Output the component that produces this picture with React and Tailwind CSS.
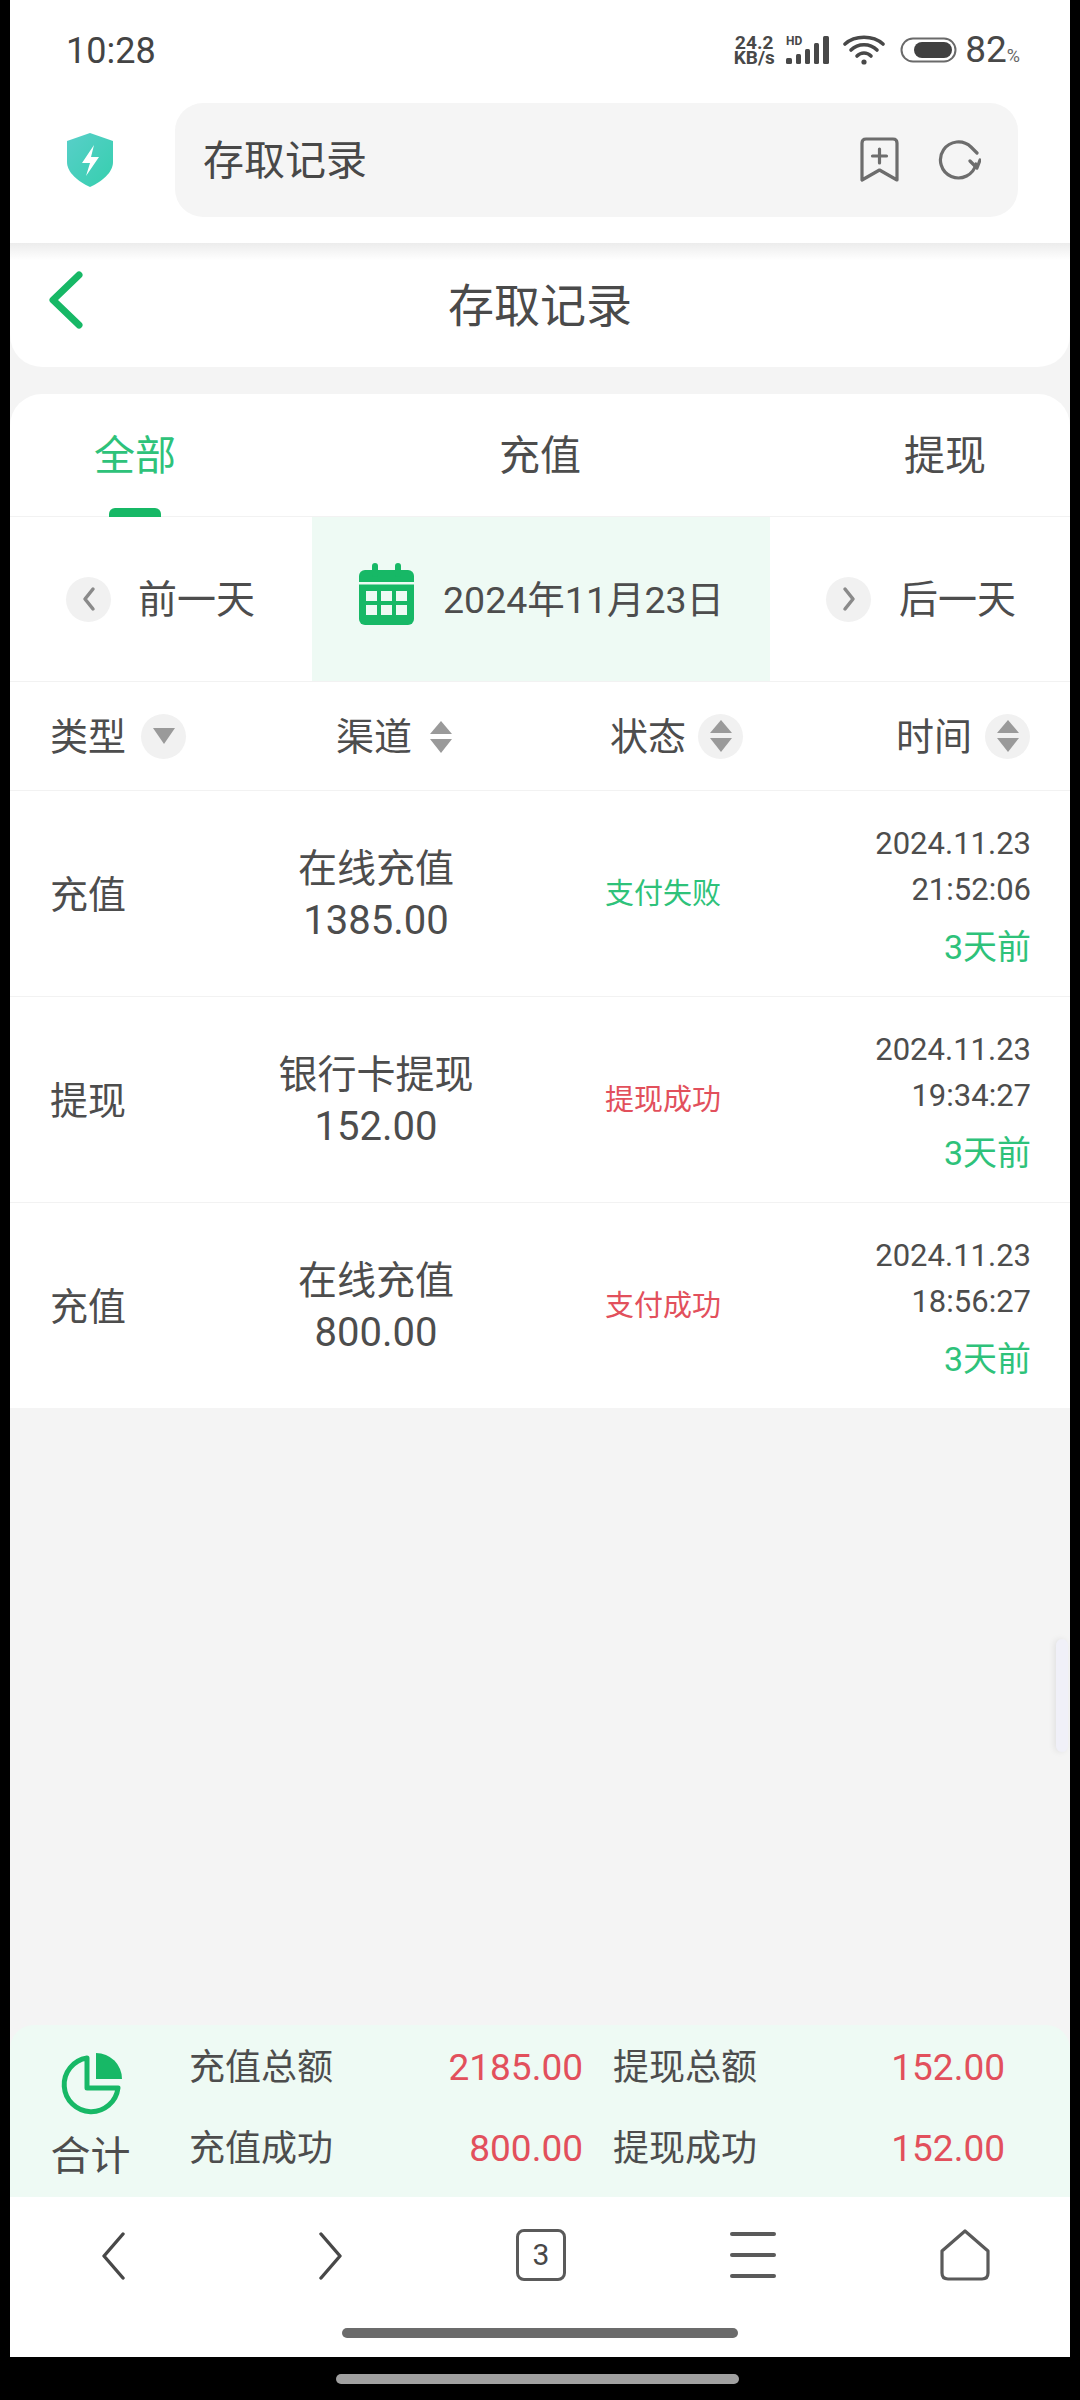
const font = { fontFamily: "Roboto, 'Noto Sans CJK SC', sans-serif" };

function Sort({ only }) {
  return (
    <svg width="24" height="34" viewBox="0 0 24 34" className="block">
      {!only && <path d="M12 1 L23 14 H1 Z" fill="#9a9a9a" />}
      <path d="M1 19 H23 L12 33 Z" fill="#9a9a9a" />
    </svg>
  );
}

function SortCircle({ only }) {
  return (
    <div className="w-[45px] h-[45px] rounded-full bg-[#f1f1f1] flex items-center justify-center">
      {only ? (
        <svg width="24" height="18" viewBox="0 0 24 18"><path d="M1 1 H23 L12 17 Z" fill="#9a9a9a" /></svg>
      ) : (
        <Sort />
      )}
    </div>
  );
}

function RoundChevron({ right }) {
  return (
    <div className="w-[45px] h-[45px] rounded-full bg-[#f1f1f1] flex items-center justify-center shrink-0">
      <svg width="16" height="26" viewBox="0 0 16 26" fill="none" stroke="#8a8a8a" strokeWidth="3.5" strokeLinecap="round" strokeLinejoin="round">
        <path d={right ? "M4 3 L12 13 L4 23" : "M12 3 L4 13 L12 23"} />
      </svg>
    </div>
  );
}

const rows = [
  { type: "充值", channel: "在线充值", amount: "1385.00", status: "支付失败", statusClass: "text-[#2ec27a]", time: "21:52:06" },
  { type: "提现", channel: "银行卡提现", amount: "152.00", status: "提现成功", statusClass: "text-[#e2505c]", time: "19:34:27" },
  { type: "充值", channel: "在线充值", amount: "800.00", status: "支付成功", statusClass: "text-[#e2505c]", time: "18:56:27" },
];

export default function App() {
  return (
    <div style={font} className="w-[1080px] h-[2400px] bg-black flex flex-col text-[#4d4d4d] overflow-hidden">
      <div className="relative mx-[10px] h-[2357px] bg-[#f4f4f4] flex flex-col">
        {/* browser chrome */}
        <div className="h-[243px] bg-white shrink-0 flex flex-col">
          <div className="h-[103px] flex items-start justify-between pt-[28px] pl-[56px] pr-[50px]">
            <span className="text-[36px] leading-[46px] text-[#444]">10:28</span>
            <div className="flex items-center h-[40px] mt-[2px] text-[#484848]">
              <div className="flex flex-col items-center font-bold text-[19px] leading-[15px] w-[44px]">
                <span>24.2</span>
                <span>KB/s</span>
              </div>
              <svg width="50" height="32" viewBox="0 0 50 32" className="ml-[8px]" fill="#484848">
                <text x="2" y="11" fontSize="12" fontWeight="700" fontFamily="Roboto, sans-serif">HD</text>
                <rect x="2" y="24" width="6" height="6" rx="1.5" />
                <rect x="12" y="20" width="5" height="10" rx="1.5" />
                <rect x="21" y="15" width="5" height="15" rx="1.5" />
                <rect x="30" y="9" width="5" height="21" rx="1.5" />
                <rect x="39" y="2" width="6" height="28" rx="1.5" />
              </svg>
              <svg width="44" height="32" viewBox="0 0 44 32" className="ml-[9px]" fill="none" stroke="#484848" strokeWidth="3.6" strokeLinecap="round">
                <path d="M2 10 C12 1 30 1 40 10" />
                <path d="M8 16 C15 9 27 9 34 16" />
                <path d="M14 22 C18 18 24 18 28 22" />
                <circle cx="21" cy="28" r="2.6" fill="#484848" stroke="none" />
              </svg>
              <svg width="57" height="26" viewBox="0 0 57 26" className="ml-[13px]" fill="none">
                <rect x="1.5" y="1.5" width="54" height="23" rx="11.5" stroke="#6a6a6a" strokeWidth="2" />
                <rect x="14" y="5" width="38" height="16" rx="8" fill="#404040" />
              </svg>
              <span className="text-[37px] leading-[40px] ml-[8px]">82</span>
              <span className="text-[18px] leading-[18px] mt-[12px] text-[#666]">%</span>
            </div>
          </div>
          <div className="flex items-center h-[114px]">
            <svg width="50" height="56" viewBox="0 0 50 56" className="ml-[55px] shrink-0">
              <defs>
                <linearGradient id="sh" x1="0" y1="0" x2="1" y2="1">
                  <stop offset="0" stopColor="#58cfc9" />
                  <stop offset="1" stopColor="#36cfae" />
                </linearGradient>
              </defs>
              <path d="M25 1 L48 9 V30 C48 41 36 50 25 55 C14 50 2 41 2 30 V9 Z" fill="url(#sh)" />
              <path d="M29 13 L17 31 H25 L21 44 L34 25 H26 Z" fill="#fff" />
            </svg>
            <div className="ml-[60px] w-[843px] h-[114px] rounded-[28px] bg-[#f5f5f5] flex items-center pl-[28px] pr-[37px]">
              <span className="text-[41px] leading-[50px] flex-1 text-[#484848] pt-[2px]">存取记录</span>
              <svg width="41" height="46" viewBox="0 0 39 46" fill="none" stroke="#6d6d6d" strokeWidth="3.2" strokeLinecap="round" strokeLinejoin="round">
                <path d="M2 6 C2 3 4 2 6 2 H33 C35 2 37 3 37 6 V43 L19.5 33 L2 43 Z" />
                <path d="M19.5 12 V26 M12.5 19 H26.5" />
              </svg>
              <svg width="43" height="42" viewBox="0 0 43 42" className="ml-[38px]" fill="none" stroke="#6d6d6d" strokeWidth="3.2" strokeLinecap="round" strokeLinejoin="round">
                <path d="M38 25 A18 18 0 1 1 33 8 L39 14" />
                <path d="M32 22 L39 29 L42 21" />
              </svg>
            </div>
          </div>
        </div>

        {/* page title */}
        <div className="h-[124px] shrink-0 rounded-b-[32px] bg-white relative flex items-center justify-center bg-gradient-to-b from-[#ececec] via-white via-[14%] to-white">
          <svg width="36" height="58" viewBox="0 0 36 58" className="absolute left-[38px] top-[28px]" fill="none" stroke="#17b866" strokeWidth="7" strokeLinecap="round" strokeLinejoin="round">
            <path d="M31 4 L5 29 L31 54" />
          </svg>
          <span className="text-[46px] leading-[60px] text-[#4a4a4a] mt-[1px]">存取记录</span>
        </div>

        {/* card */}
        <div className="mt-[27px] bg-white rounded-t-[32px] shrink-0">
          <div className="h-[123px] flex border-b border-[#f2f2f2] relative">
            <div className="w-[250px] flex items-center justify-center pt-[3px] text-[41px] text-[#2ec27a]">全部</div>
            <div className="flex-1 flex items-center justify-center pt-[3px] text-[41px]">充值</div>
            <div className="w-[250px] flex items-center justify-center pt-[3px] text-[41px]">提现</div>
            <div className="absolute left-[99px] bottom-[-1px] w-[52px] h-[9px] rounded-t-[6px] bg-[#17b866]" />
          </div>
          <div className="h-[165px] flex items-stretch border-b border-[#f2f2f2]">
            <div className="w-[302px] flex items-center pl-[56px]">
              <RoundChevron />
              <span className="ml-[27px] text-[39px] pt-[3px]">前一天</span>
            </div>
            <div className="w-[458px] bg-[#eefaf4] flex items-center pl-[47px]">
              <svg width="55" height="62" viewBox="0 0 55 62" className="shrink-0 mt-[-11px]">
                <rect x="0" y="7" width="55" height="55" rx="6" fill="#17b866" />
                <rect x="13" y="0" width="6" height="14" rx="3" fill="#17b866" />
                <rect x="36" y="0" width="6" height="14" rx="3" fill="#17b866" />
                <rect x="0" y="19" width="55" height="2.5" fill="#eefaf4" />
                <rect x="7" y="28" width="11" height="10" fill="#eefaf4" />
                <rect x="22" y="28" width="11" height="10" fill="#eefaf4" />
                <rect x="37" y="28" width="11" height="10" fill="#eefaf4" />
                <rect x="7" y="42" width="11" height="10" fill="#eefaf4" />
                <rect x="22" y="42" width="11" height="10" fill="#eefaf4" />
                <rect x="37" y="42" width="11" height="10" fill="#eefaf4" />
              </svg>
              <span className="ml-[29px] text-[37.5px] whitespace-nowrap pt-[3px]">2024年11月23日</span>
            </div>
            <div className="flex-1 flex items-center pl-[56px]">
              <RoundChevron right />
              <span className="ml-[28px] text-[39px] pt-[3px]">后一天</span>
            </div>
          </div>
          <div className="h-[109px] grid grid-cols-[286px_274px_1fr] items-center pl-[40px] pr-[40px] border-b border-[#f2f2f2] text-[38px]">
            <div className="flex items-center">
              <span className="pt-[3px]">类型</span>
              <div className="ml-[15px]"><SortCircle only /></div>
            </div>
            <div className="flex items-center">
              <span className="pt-[3px]">渠道</span>
              <div className="ml-[17px] pt-[2px]"><Sort /></div>
            </div>
            <div className="flex items-center justify-between">
              <div className="flex items-center">
                <span className="pt-[3px]">状态</span>
                <div className="ml-[12px]"><SortCircle /></div>
              </div>
              <div className="flex items-center">
                <span className="pt-[3px]">时间</span>
                <div className="ml-[13px]"><SortCircle /></div>
              </div>
            </div>
          </div>
          {rows.map((r, i) => (
            <div key={i} className={`${i < 2 ? "h-[206px] border-b border-[#f2f2f2]" : "h-[205px]"} grid grid-cols-[174px_304px_272px_1fr] items-center pl-[40px] pr-[39px] pt-[3px]`}>
              <span className="text-[38px]">{r.type}</span>
              <div className="flex flex-col items-center">
                <span className="text-[39px] leading-[52px]">{r.channel}</span>
                <span className="text-[40px] leading-[52px]">{r.amount}</span>
              </div>
              <div className={`text-center text-[29px] ml-[-2px] ${r.statusClass}`}>{r.status}</div>
              <div className="flex flex-col items-end text-[31px]">
                <span className="leading-[46px]">2024.11.23</span>
                <span className="leading-[46px]">{r.time}</span>
                <span className="leading-[46px] mt-[11px] text-[34px] text-[#2ec27a]">3天前</span>
              </div>
            </div>
          ))}
        </div>

        <div className="flex-1" />

        {/* totals */}
        <div className="h-[172px] shrink-0 bg-[#eefaf4] rounded-t-[24px] flex pl-[40px]">
          <div className="w-[81px] flex flex-col items-center pt-[28px]">
            <svg width="64" height="62" viewBox="0 0 62 62" fill="none">
              <path d="M27 5 A 27 27 0 1 0 58 35 L 27 35 Z" stroke="#17b866" strokeWidth="5" strokeLinejoin="round" />
              <path d="M36 0 A 26 26 0 0 1 62 26 L 36 26 Z" fill="#17b866" />
            </svg>
            <span className="text-[40px] leading-[50px] mt-[17px]">合计</span>
          </div>
          <div className="ml-[58px] grid grid-cols-[394px_392px] gap-x-[30px] content-start pt-[18px] text-[36px]">
            {[["充值总额", "2185.00"], ["提现总额", "152.00"], ["充值成功", "800.00"], ["提现成功", "152.00"]].map(([a, b], i) => (
              <div key={i} className={`flex justify-between items-center h-[50px] ${i > 1 ? "mt-[31px]" : ""}`}>
                <span>{a}</span>
                <span className="text-[37px] text-[#e2505c]">{b}</span>
              </div>
            ))}
          </div>
        </div>

        {/* browser nav */}
        <div className="h-[160px] shrink-0 bg-white flex flex-col items-center">
          <div className="w-full flex items-start h-[131px] pt-[32px] pl-[90px] relative">
            <svg width="26" height="48" viewBox="0 0 24 48" fill="none" stroke="#484848" strokeWidth="3.4" strokeLinecap="round" strokeLinejoin="round" className="mt-[3px]">
              <path d="M22 2 L3 24 L22 46" />
            </svg>
            <svg width="26" height="48" viewBox="0 0 24 48" fill="none" stroke="#484848" strokeWidth="3.4" strokeLinecap="round" strokeLinejoin="round" className="ml-[192px] mt-[3px]">
              <path d="M2 2 L21 24 L2 46" />
            </svg>
            <div className="ml-[172px] w-[50px] h-[52px] rounded-[8px] border-[3px] border-[#5a5a5a] flex items-center justify-center text-[30px] leading-none text-[#484848]">3</div>
            <div className="ml-[164px] w-[46px] h-[46px] mt-[3px] flex flex-col justify-between">
              <div className="h-[4px] bg-[#5a5a5a] rounded-full" />
              <div className="h-[4px] bg-[#5a5a5a] rounded-full" />
              <div className="h-[4px] bg-[#5a5a5a] rounded-full" />
            </div>
            <svg width="52" height="52" viewBox="0 0 50 52" fill="none" stroke="#5a5a5a" strokeWidth="3.2" strokeLinejoin="round" className="ml-[163px]">
              <path d="M25 2 L48 22 V44 C48 48 46 50 42 50 H8 C4 50 2 48 2 44 V22 Z" />
            </svg>
          </div>
          <div className="w-[396px] h-[10px] rounded-full bg-[#6b6b6b]" />
        </div>

        {/* floating edge handle */}
        <div className="absolute right-[2px] top-[1639px] w-[12px] h-[113px] rounded-[6px] bg-[#f0f0f8] shadow-[-2px_0_6px_rgba(0,0,0,0.08)]" />
      </div>
      <div className="flex-1 flex justify-center pt-[17px]">
        <div className="w-[403px] h-[10px] rounded-full bg-[#a0a0a0] mr-[6px]" />
      </div>
    </div>
  );
}
